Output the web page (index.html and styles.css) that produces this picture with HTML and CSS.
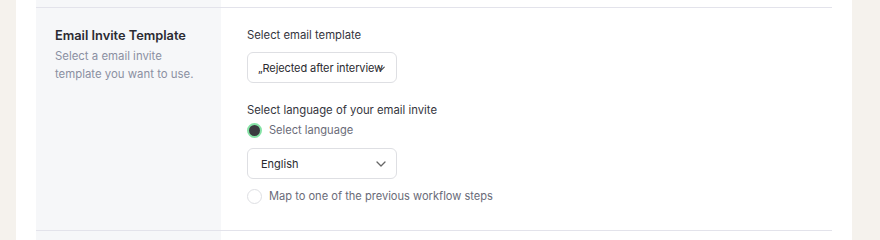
FILE: index.html
```html
<!DOCTYPE html>
<html lang="en">
<head>
    <meta charset="UTF-8">
    <meta name="viewport" content="width=device-width, initial-scale=1.0">
    <title>Email Invite Template</title>
    <link rel="stylesheet" href="styles.css">
</head>
<body>
    <div class="card">
        <div class="section section-prev">
            <div class="side"></div>
            <div class="main"></div>
        </div>

        <div class="section">
            <div class="side">
                <h3>Email Invite Template</h3>
                <p>Select a email invite template you want to use.</p>
            </div>
            <div class="main">
                <label class="field-label">Select email template</label>
                <div class="select select-template">
                    <span class="select-text">„Rejected after interview</span>
                    <svg class="chevron chevron-small" viewBox="0 0 10 6" width="7" height="5"><path d="M1 1l4 4 4-4" fill="none" stroke="#444" stroke-width="1.5" stroke-linecap="round" stroke-linejoin="round"/></svg>
                </div>

                <label class="field-label field-label-spaced">Select language of your email invite</label>
                <div class="radio-row">
                    <span class="radio checked"></span>
                    <span>Select language</span>
                </div>
                <div class="select select-language">
                    <span class="select-text">English</span>
                    <svg class="chevron" viewBox="0 0 10 6" width="10" height="6"><path d="M1 1l4 4 4-4" fill="none" stroke="#666" stroke-width="1.3" stroke-linecap="round" stroke-linejoin="round"/></svg>
                </div>
                <div class="radio-row radio-row-last">
                    <span class="radio"></span>
                    <span>Map to one of the previous workflow steps</span>
                </div>
            </div>
        </div>

        <div class="section section-next">
            <div class="side"></div>
            <div class="main"></div>
        </div>
    </div>
</body>
</html>
```

FILE: styles.css
```css
:root {
    --page-bg: #f5f2ed;
    --card-bg: #ffffff;
    --side-bg: #f6f7f9;
    --line-color: #e3e3eb;
    --title-color: #2b2b33;
    --muted-color: #8b90a2;
    --text-color: #35353d;
    --soft-text: #6a6b78;
    --input-border: #dedfe3;
}

html, body {
    margin: 0;
    padding: 0;
}

body {
    font-family: Inter, "Noto Sans", sans-serif;
    background-color: var(--page-bg);
    color: var(--text-color);
    height: 240px;
    overflow: hidden;
}

.card {
    margin-left: 16px;
    width: 796px;
    height: 240px;
    padding: 0 20px;
    background-color: var(--card-bg);
}

.section {
    display: grid;
    grid-template-columns: 185px 1fr;
    border-bottom: 1px solid var(--line-color);
}

.section-prev {
    height: 7px;
}

.section-next {
    height: 20px;
    border-bottom: none;
}

.side {
    background-color: var(--side-bg);
    padding: 0 19px;
}

.section .side h3 {
    margin: 19px 0 0;
    font-size: 12.8px;
    line-height: 18px;
    font-weight: 600;
    color: var(--title-color);
}

.side p {
    margin: 2px 0 0;
    font-size: 11.4px;
    line-height: 18px;
    color: var(--muted-color);
}

.main {
    padding: 18px 26px 25px;
}

.section-prev .main,
.section-next .main,
.section-prev .side,
.section-next .side {
    padding: 0;
}

.field-label {
    display: block;
    font-size: 11.3px;
    line-height: 18px;
    color: var(--text-color);
}

.field-label-spaced {
    margin-top: 18px;
}

.select {
    position: relative;
    box-sizing: border-box;
    width: 150px;
    height: 31px;
    margin-top: 8px;
    border: 1px solid var(--input-border);
    border-radius: 6px;
    display: flex;
    align-items: center;
    font-size: 11px;
    color: #2a2a30;
    white-space: nowrap;
    overflow: hidden;
}

.select-template {
    padding-left: 10px;
}

.select-template .select-text {
    letter-spacing: -0.1px;
}

.select-language {
    margin-top: 9px;
    padding-left: 13px;
}

.chevron {
    position: absolute;
    right: 10px;
    top: 12px;
}

.chevron-small {
    right: 11px;
    top: 13px;
}

.radio-row {
    display: flex;
    align-items: center;
    gap: 7px;
    margin-top: 2px;
    height: 18px;
    font-size: 11.1px;
    color: var(--soft-text);
}

.radio-row-last {
    margin-top: 8px;
}

.radio {
    box-sizing: border-box;
    width: 15px;
    height: 15px;
    border-radius: 50%;
    border: 1px solid var(--input-border);
    background-color: #fff;
}

.radio.checked {
    border: 2px solid #86e3a6;
    background-color: #3b3b40;
}
```
